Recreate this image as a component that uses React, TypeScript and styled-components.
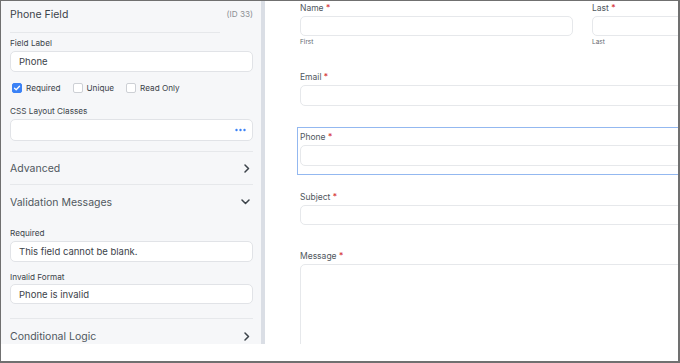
import styled, { createGlobalStyle } from 'styled-components'

const GlobalStyle = createGlobalStyle`
  html, body {
    margin: 0;
    padding: 0;
    background: #ffffff;
  }
  * {
    box-sizing: border-box;
  }
  body {
    font-family: Inter, "Noto Sans", sans-serif;
    color: #3c434a;
  }
`

const Frame = styled.div`
  width: 680px;
  height: 363px;
  border-top: 1px solid #707070;
  border-left: 1px solid #707070;
  border-right: 2px solid #707070;
  border-bottom: 2px solid #707070;
  background: #ffffff;
  display: flex;
  flex-direction: column;
  overflow: hidden;
`

const Workspace = styled.div`
  height: 343px;
  flex: none;
  display: flex;
  overflow: hidden;
`

const Sidebar = styled.aside`
  width: 264px;
  flex: none;
  background: #f6f7f9;
  border-right: 4px solid #dadee5;
  padding: 6px 8px 0 9px;
  display: flex;
  flex-direction: column;
  overflow: hidden;

  & > * {
    flex-shrink: 0;
  }
`

const SidebarHead = styled.div`
  display: flex;
  justify-content: space-between;
  align-items: flex-start;
  height: 16px;
  margin-bottom: 9px;
`

const Title = styled.h2`
  margin: 0;
  font-size: 10.5px;
  line-height: 16px;
  font-weight: 400;
  color: #3c434a;
`

const FieldId = styled.span`
  font-size: 8.2px;
  line-height: 12px;
  color: #8c8f94;
  margin-top: 1px;
`

const Rule = styled.hr<{ $short?: boolean; $top?: number }>`
  border: none;
  border-top: 1px solid #e6e8eb;
  margin: ${({ $top }) => $top ?? 0}px 0 0 0;
  width: ${({ $short }) => ($short ? '210px' : '100%')};
`

const Label = styled.label`
  display: block;
  font-size: 8.2px;
  line-height: 12px;
  color: #3c434a;
`

const TextBox = styled.div<{ $h?: number }>`
  height: ${({ $h }) => $h ?? 21}px;
  background: #ffffff;
  border: 1px solid #e1e3e7;
  border-radius: 5px;
  display: flex;
  align-items: center;
  justify-content: space-between;
  padding: 0 6px 0 8px;
  font-size: 9.5px;
  color: #3c434a;
`

const Stack = styled.div<{ $top: number; $gap?: number }>`
  margin-top: ${({ $top }) => $top}px;
  display: flex;
  flex-direction: column;
  gap: ${({ $gap }) => $gap ?? 2}px;
`

const CheckRow = styled.div`
  margin-top: 9px;
  height: 14px;
  display: flex;
  align-items: center;
  gap: 12px;
  padding-left: 2px;
`

const CheckItem = styled.span`
  display: flex;
  align-items: center;
  gap: 4px;
  font-size: 8.2px;
  color: #3c434a;
`

const Box = styled.span<{ $checked?: boolean }>`
  width: 10px;
  height: 10px;
  border-radius: 2px;
  border: 1px solid ${({ $checked }) => ($checked ? '#3b82f6' : '#cdd0d5')};
  background: ${({ $checked }) => ($checked ? '#3b82f6' : '#ffffff')};
  display: flex;
  align-items: center;
  justify-content: center;
`

const SectionRow = styled.div<{ $h: number }>`
  height: ${({ $h }) => $h}px;
  display: flex;
  align-items: center;
  justify-content: space-between;
  padding-right: 3px;
  font-size: 10.5px;
  color: #50575e;
`

const Canvas = styled.main`
  flex: 1;
  background: #ffffff;
  padding-left: 32px;
  overflow: hidden;
`

const Form = styled.div`
  width: 571px;
  margin-top: -3px;
  display: flex;
  flex-direction: column;
  gap: 12px;
`

const NameRow = styled.div`
  display: grid;
  grid-template-columns: 279px 279px;
  column-gap: 13px;
`

const FieldBox = styled.div<{ $active?: boolean }>`
  border: 1px solid ${({ $active }) => ($active ? '#93b8f0' : 'transparent')};
  padding: 3px 2px 8px 2px;
  display: flex;
  flex-direction: column;
  gap: 2px;
`

const FormLabel = styled.div`
  font-size: 8.5px;
  line-height: 12px;
  color: #50575e;
`

const Star = styled.span`
  color: #d63638;
`

const FormInput = styled.div<{ $h?: number }>`
  height: ${({ $h }) => $h ?? 21}px;
  border: 1px solid #e6e8eb;
  border-radius: 5px;
  background: #ffffff;
`

const SubLabel = styled.div`
  font-size: 6.5px;
  line-height: 8px;
  color: #646970;
`

const Footer = styled.div`
  flex: 1;
  background: #ffffff;
`

function Chevron({ down }: { down?: boolean }) {
  return down ? (
    <svg width="9" height="6" viewBox="0 0 9 6">
      <polyline points="1,1 4.5,4.5 8,1" fill="none" stroke="#3c434a" strokeWidth="1.5" strokeLinecap="round" strokeLinejoin="round" />
    </svg>
  ) : (
    <svg width="6" height="9" viewBox="0 0 6 9">
      <polyline points="1,1 4.5,4.5 1,8" fill="none" stroke="#3c434a" strokeWidth="1.5" strokeLinecap="round" strokeLinejoin="round" />
    </svg>
  )
}

function Dots() {
  return (
    <svg width="11" height="4" viewBox="0 0 11 4">
      <circle cx="1.5" cy="2" r="1.2" fill="#3b82f6" />
      <circle cx="5.5" cy="2" r="1.2" fill="#3b82f6" />
      <circle cx="9.5" cy="2" r="1.2" fill="#3b82f6" />
    </svg>
  )
}

function Check({ label, checked }: { label: string; checked?: boolean }) {
  return (
    <CheckItem>
      <Box $checked={checked}>
        {checked && (
          <svg width="8" height="8" viewBox="0 0 8 8">
            <polyline points="1.5,4.2 3.2,5.8 6.5,2.2" fill="none" stroke="#ffffff" strokeWidth="1.3" strokeLinecap="round" strokeLinejoin="round" />
          </svg>
        )}
      </Box>
      {label}
    </CheckItem>
  )
}

function Field({ label, height, sub, active }: { label: string; height?: number; sub?: string; active?: boolean }) {
  return (
    <FieldBox $active={active}>
      <FormLabel>
        {label} <Star>*</Star>
      </FormLabel>
      <FormInput $h={height} />
      {sub && <SubLabel>{sub}</SubLabel>}
    </FieldBox>
  )
}

export default function App() {
  return (
    <>
      <GlobalStyle />
      <Frame>
        <Workspace>
          <Sidebar>
            <SidebarHead>
              <Title>Phone Field</Title>
              <FieldId>(ID 33)</FieldId>
            </SidebarHead>
            <Rule $short />

            <Stack $top={4}>
              <Label>Field Label</Label>
              <TextBox>Phone</TextBox>
            </Stack>

            <CheckRow>
              <Check label="Required" checked />
              <Check label="Unique" />
              <Check label="Read Only" />
            </CheckRow>

            <Stack $top={10}>
              <Label>CSS Layout Classes</Label>
              <TextBox $h={22}>
                <span />
                <Dots />
              </TextBox>
            </Stack>

            <Rule $top={10} />
            <SectionRow $h={32}>
              Advanced
              <Chevron />
            </SectionRow>
            <Rule />
            <SectionRow $h={34}>
              Validation Messages
              <Chevron down />
            </SectionRow>

            <Stack $top={8}>
              <Label>Required</Label>
              <TextBox>This field cannot be blank.</TextBox>
            </Stack>
            <Stack $top={9} $gap={1}>
              <Label>Invalid Format</Label>
              <TextBox $h={20}>Phone is invalid</TextBox>
            </Stack>

            <Rule $top={14} />
            <SectionRow $h={34}>
              Conditional Logic
              <Chevron />
            </SectionRow>
          </Sidebar>

          <Canvas>
            <Form>
              <NameRow>
                <Field label="Name" height={20} sub="First" />
                <Field label="Last" height={20} sub="Last" />
              </NameRow>
              <Field label="Email" />
              <Field label="Phone" active />
              <Field label="Subject" height={20} />
              <Field label="Message" height={120} />
            </Form>
          </Canvas>
        </Workspace>
        <Footer />
      </Frame>
    </>
  )
}
